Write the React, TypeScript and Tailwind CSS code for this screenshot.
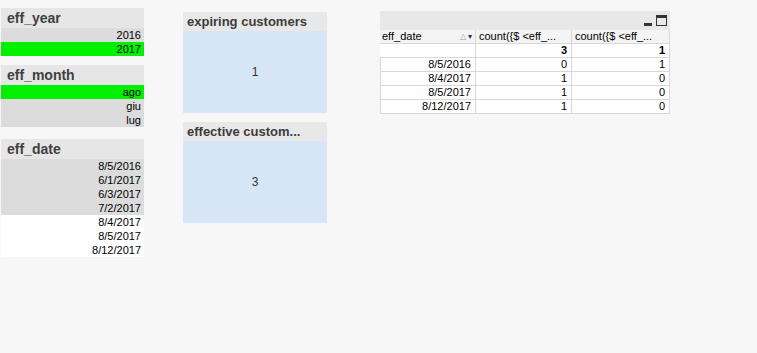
import React from "react";

const hdrFont = { fontFamily: '"Liberation Sans", Arial, sans-serif' };

function ListBox({ title, rows, height }: { title: string; rows: { v: string; bg: string }[]; height: string }) {
  return (
    <div className={`flex flex-col bg-[#f0f0f0] ${height}`}>
      <div className="h-[20px] bg-[#e6e6e6] flex items-center pl-[6px] text-[14px] font-bold text-[#404040]" style={hdrFont}>
        {title}
      </div>
      {rows.map((r) => (
        <div key={r.v} className={`h-[14px] flex items-center justify-end pr-[3px] text-[11px] text-black ${r.bg}`}>
          {r.v}
        </div>
      ))}
    </div>
  );
}

function TextBox({ title, value }: { title: string; value: string }) {
  return (
    <div className="flex flex-col w-[144px] h-[101px] bg-[#d6e6f6]">
      <div className="h-[19px] bg-[#e8e8e8] flex items-center pl-[4px] text-[13px] font-bold text-[#3c3c3c] whitespace-nowrap overflow-hidden" style={hdrFont}>
        {title}
      </div>
      <div className="flex-1 flex items-center justify-center text-[12px] text-[#333]">{value}</div>
    </div>
  );
}

export default function App() {
  const green = "bg-[#00f000]";
  const gray = "bg-[#dcdcdc]";
  const white = "bg-white";
  const cell = "border-r border-b border-[#d8d8d8] flex items-center justify-end pr-[4px]";
  const data = [
    ["8/5/2016", "0", "1"],
    ["8/4/2017", "1", "0"],
    ["8/5/2017", "1", "0"],
    ["8/12/2017", "1", "0"],
  ];
  return (
    <div className="w-[757px] h-[353px] bg-[#f7f7f7] flex items-start text-[11px]" style={{ fontFamily: '"Liberation Sans", Arial, sans-serif' }}>
      <div className="ml-[1px] mt-[8px] w-[143px] flex flex-col">
        <ListBox title="eff_year" height="h-[48px]" rows={[{ v: "2016", bg: gray }, { v: "2017", bg: green }]} />
        <div className="h-[9px]" />
        <ListBox title="eff_month" height="h-[62px]" rows={[{ v: "ago", bg: green }, { v: "giu", bg: gray }, { v: "lug", bg: gray }]} />
        <div className="h-[12px]" />
        <ListBox
          title="eff_date"
          height="h-[118px]"
          rows={[
            { v: "8/5/2016", bg: gray },
            { v: "6/1/2017", bg: gray },
            { v: "6/3/2017", bg: gray },
            { v: "7/2/2017", bg: gray },
            { v: "8/4/2017", bg: white },
            { v: "8/5/2017", bg: white },
            { v: "8/12/2017", bg: white },
          ]}
        />
      </div>
      <div className="ml-[39px] mt-[12px] flex flex-col gap-[9px]">
        <TextBox title="expiring customers" value="1" />
        <TextBox title="effective custom..." value="3" />
      </div>
      <div className="ml-[53px] mt-[11px] w-[290px] flex flex-col bg-white">
        <div className="h-[19px] bg-[#e8e8e8] flex items-center justify-end gap-[4px] pr-[3px]">
          <div className="w-[8px] h-[3px] bg-[#333] mt-[7px]" />
          <div className="w-[11px] h-[11px] border border-[#333] border-t-[3px]" />
        </div>
        <div className="grid grid-cols-[96px_96px_98px] text-[11px] text-black">
          <div className="h-[14px] bg-[#f4f4f4] border-r border-b border-[#d8d8d8] flex items-center pl-[2px] justify-between pr-[3px]">
            <span>eff_date</span>
            <span className="text-[8px] text-[#999] flex items-center gap-[2px]">
              <span>△</span>
              <span className="text-[#333]">▾</span>
            </span>
          </div>
          <div className="h-[14px] bg-[#f4f4f4] border-r border-b border-[#d8d8d8] flex items-center pl-[3px] whitespace-nowrap overflow-hidden">count({"{"}$ &lt;eff_...</div>
          <div className="h-[14px] bg-[#f4f4f4] border-r border-b border-[#d8d8d8] flex items-center pl-[3px] whitespace-nowrap overflow-hidden">count({"{"}$ &lt;eff_...</div>
          <div className={`h-[14px] ${cell}`}></div>
          <div className={`h-[14px] ${cell} font-bold`}>3</div>
          <div className={`h-[14px] ${cell} font-bold`}>1</div>
          {data.map((r) => (
            <React.Fragment key={r[0]}>
              <div className={`h-[14px] ${cell} border-l`}>{r[0]}</div>
              <div className={`h-[14px] ${cell}`}>{r[1]}</div>
              <div className={`h-[14px] ${cell}`}>{r[2]}</div>
            </React.Fragment>
          ))}
        </div>
      </div>
    </div>
  );
}
